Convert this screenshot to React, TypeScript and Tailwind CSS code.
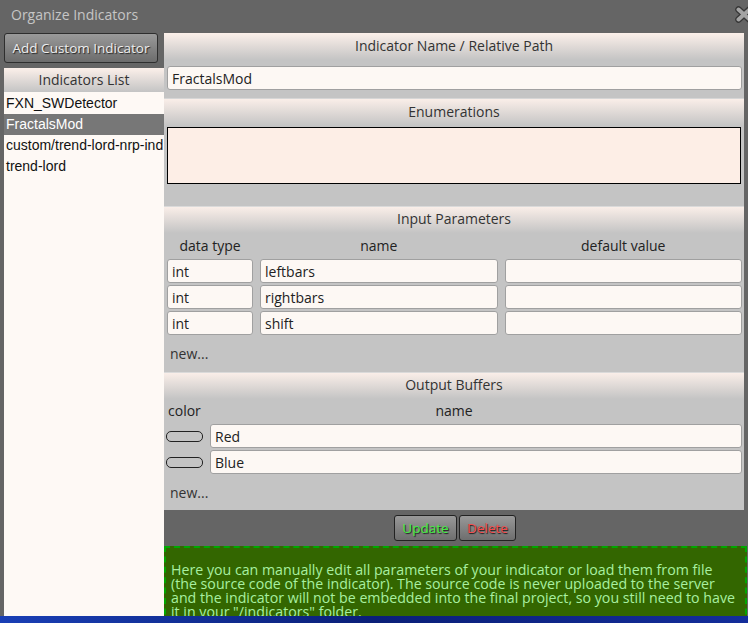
import React from "react";

const ui = "font-['Open_Sans','Noto_Sans',sans-serif]";

type Param = { type: string; name: string; value: string };

const params: Param[] = [
  { type: "int", name: "leftbars", value: "" },
  { type: "int", name: "rightbars", value: "" },
  { type: "int", name: "shift", value: "" },
];

const buffers = ["Red", "Blue"];

const indicators = ["FXN_SWDetector", "FractalsMod", "custom/trend-lord-nrp-ind", "trend-lord"];

const helpLines = [
  "Here you can manually edit all parameters of your indicator or load them from file",
  "(the source code of the indicator). The source code is never uploaded to the server",
  "and the indicator will not be embedded into the final project, so you still need to have",
  'it in your "/indicators" folder.',
];

// gradient strip used as a title for every block
const SectionHeader = ({ title, className = "" }: { title: string; className?: string }) => (
  <div
    className={`flex shrink-0 items-center justify-center bg-gradient-to-b from-[#fcf0ea] to-[#c4c4c4] pb-[2px] text-[14px] text-[#333] ${className}`}
  >
    {title}
  </div>
);

const Field = ({ value, className = "" }: { value: string; className?: string }) => (
  <div
    className={`flex h-[24px] items-center rounded-[3px] border border-[#a0a0a0] bg-[#fdf8f4] pl-[4px] text-[14px] text-[#222] ${className}`}
  >
    {value}
  </div>
);

export default function App() {
  return (
    <div className={`flex h-[623px] w-[748px] flex-col overflow-hidden bg-[#656565] ${ui}`}>
      {/* title bar */}
      <div className="relative flex h-[33px] shrink-0 items-center pb-[4px] pl-[11px] text-[14px] text-[#c6c6c6]">
        Organize Indicators
        <svg className="absolute right-[-5px] top-[6px]" width="18" height="17" viewBox="0 0 18 17">
          <path d="M3.5 3.5 L14.5 13.5 M14.5 3.5 L3.5 13.5" stroke="#363636" strokeWidth="6.5" strokeLinecap="round" />
          <path d="M3.5 3.5 L14.5 13.5 M14.5 3.5 L3.5 13.5" stroke="#a4a4a4" strokeWidth="4" strokeLinecap="round" />
        </svg>
      </div>

      <div className="flex min-h-0 flex-1 overflow-hidden pl-[4px] pr-[4px]">
        {/* left column */}
        <div className="flex w-[160px] shrink-0 flex-col">
          <button className="mr-[6px] h-[30px] shrink-0 rounded-[3px] border border-[#2e2e2e] bg-gradient-to-b from-[#9a9a9a] to-[#6c6c6c] text-[13.5px] text-[#eeeeee] [text-shadow:1px_1px_1px_#222]">
            Add Custom Indicator
          </button>
          <div className="mt-[5px] flex min-h-0 flex-1 flex-col bg-[#fef9f5]">
            <SectionHeader title="Indicators List" className="h-[24px]" />
            <div className="pt-[1px] font-['Liberation_Sans',Arial,sans-serif] text-[14px] text-[#111]">
              {indicators.map((name) => (
                <div
                  key={name}
                  className={`flex h-[21px] items-center overflow-hidden whitespace-nowrap pl-[2px] ${
                    name === "FractalsMod" ? "bg-[#777777] text-white" : ""
                  }`}
                >
                  {name}
                </div>
              ))}
            </div>
          </div>
        </div>

        {/* right column */}
        <div className="min-w-0 flex-1 bg-[#c4c4c4]">
          <SectionHeader title="Indicator Name / Relative Path" className="h-[27px]" />
          <div className="px-[3px] pb-[8px] pt-[6px]">
            <Field value="FractalsMod" className="mr-[-1px] h-[23px]" />
          </div>

          <SectionHeader title="Enumerations" className="h-[28px] shadow-[inset_0_1px_0_#d6d6d6]" />
          <div className="px-[3px] pb-[22px] pt-[1px]">
            <div className="h-[57px] border border-black bg-[#fdeee6]" />
          </div>

          <SectionHeader title="Input Parameters" className="h-[27px] shadow-[inset_0_1px_0_#dadada]" />
          <div className="grid grid-cols-[86px_1fr_1fr] gap-x-[7px] gap-y-[2px] pl-[3px] pr-[2px] text-[14px] text-[#222]">
            <div className="flex h-[24px] items-center justify-center">data type</div>
            <div className="flex h-[24px] items-center justify-center">name</div>
            <div className="flex h-[24px] items-center justify-center">default value</div>
            {params.map((p) => (
              <React.Fragment key={p.name}>
                <Field value={p.type} />
                <Field value={p.name} />
                <Field value={p.value} />
              </React.Fragment>
            ))}
          </div>
          <div className="flex h-[37px] items-center pl-[6px] text-[14px] text-[#333]">new...</div>

          <SectionHeader title="Output Buffers" className="h-[27px] shadow-[inset_0_1px_0_#dadada]" />
          <div className="grid grid-cols-[37px_1fr] gap-x-[7px] gap-y-[2px] pl-[2px] pr-[2px] text-[14px] text-[#222]">
            <div className="flex h-[23px] items-center pl-[2px]">color</div>
            <div className="flex h-[23px] items-center justify-center pr-[44px]">name</div>
            {buffers.map((b) => (
              <React.Fragment key={b}>
                <div className="flex h-[24px] items-center">
                  <div className="h-[11px] w-[37px] rounded-[5px] border border-[#222] bg-[#c4c4c4]" />
                </div>
                <Field value={b} />
              </React.Fragment>
            ))}
          </div>
          <div className="flex h-[36px] items-center pl-[6px] text-[14px] text-[#333]">new...</div>

          {/* actions */}
          <div className="flex h-[36px] items-center justify-center gap-[2px] bg-[#656565] pl-[2px]">
            <button className="h-[26px] w-[63px] rounded-[3px] border border-[#222] bg-gradient-to-b from-[#999] to-[#6e6e6e] text-[13.5px] text-[#44ee44] [text-shadow:1px_1px_1px_#1a1a1a]">
              Update
            </button>
            <button className="h-[26px] w-[57px] rounded-[3px] border border-[#222] bg-gradient-to-b from-[#999] to-[#6e6e6e] text-[13.5px] text-[#f44c4c] [text-shadow:1px_1px_1px_#1a1a1a]">
              Delete
            </button>
          </div>

          {/* help note */}
          <div className="mr-[-3px] h-[110px] border-2 border-dashed border-[#00a800] bg-[#336600] pl-[5px] pt-[15px] text-[14.2px] leading-[14px] text-[#a8f0a0]">
            {helpLines.map((line) => (
              <div key={line} className="whitespace-nowrap">
                {line}
              </div>
            ))}
          </div>
        </div>
      </div>

      {/* desktop strip under the window */}
      <div className="h-[7px] shrink-0 bg-gradient-to-r from-[#1a3fb5] via-[#0a1f78] to-[#132d9a]" />
    </div>
  );
}
